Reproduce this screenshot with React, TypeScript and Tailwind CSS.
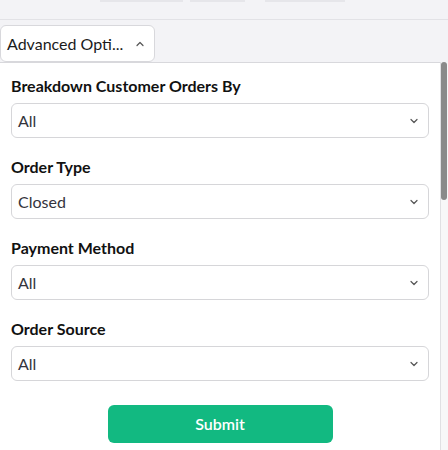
import React from "react";

const Chevron = ({ up = false }: { up?: boolean }) => (
  <svg width="12" height="12" viewBox="0 0 12 12" fill="none" className={up ? "rotate-180" : ""}>
    <path d="M3 4.5 L6 7.5 L9 4.5" stroke="#555" strokeWidth="1.2" strokeLinecap="round" strokeLinejoin="round" />
  </svg>
);

const Field = ({ label, value }: { label: string; value: string }) => (
  <div className="flex flex-col">
    <div className="h-[20px] leading-[20px] text-[16px] font-bold text-[#111] pl-[11px]">{label}</div>
    <div className="mt-[7px] ml-[11px] w-[418px] h-[35px] border border-[#d6d6d9] rounded-[6px] bg-white flex items-center justify-between pl-[6px] pr-[8px]">
      <span className="text-[16px] text-[#34343c]">{value}</span>
      <Chevron />
    </div>
  </div>
);

export default function App() {
  return (
    <div className="w-[448px] h-[450px] bg-[#f3f3f6] overflow-hidden flex flex-col" style={{ fontFamily: "Lato, 'Noto Sans', sans-serif" }}>
      <div className="h-[20px] border-b border-[#e2e2e6] flex items-start">
        <div className="ml-[100px] mt-0 w-[83px] h-[2px] bg-[#e6e6ea]" />
        <div className="ml-[7px] w-[55px] h-[2px] bg-[#e6e6ea]" />
        <div className="ml-[20px] w-[80px] h-[2px] bg-[#e6e6ea]" />
      </div>
      <div className="mt-[5px] flex">
        <div className="w-[155px] h-[37px] bg-white border border-[#d8d8dc] rounded-[6px] flex items-center pl-[6px] pr-[8px] justify-between">
          <span className="text-[16px] text-[#1b1b1b]">Advanced Opti...</span>
          <Chevron up />
        </div>
      </div>
      <div className="flex flex-1 min-h-0">
        <div className="w-[440px] bg-white border-t border-[#d8d8dc] flex flex-col pt-[13px]">
          <div className="flex flex-col gap-[19px]">
            <Field label="Breakdown Customer Orders By" value="All" />
            <Field label="Order Type" value="Closed" />
            <Field label="Payment Method" value="All" />
            <Field label="Order Source" value="All" />
          </div>
          <div className="mt-[24px] flex justify-center">
            <button className="w-[225px] h-[38px] rounded-[6px] bg-[#12b981] text-white text-[16px] font-semibold">Submit</button>
          </div>
        </div>
        <div className="w-[8px] bg-[#f7f7f8] border-l border-[#e0e0e3] flex flex-col">
          <div className="w-[6px] h-[138px] bg-[#8a8a8a] rounded-[3px]" />
        </div>
      </div>
    </div>
  );
}
